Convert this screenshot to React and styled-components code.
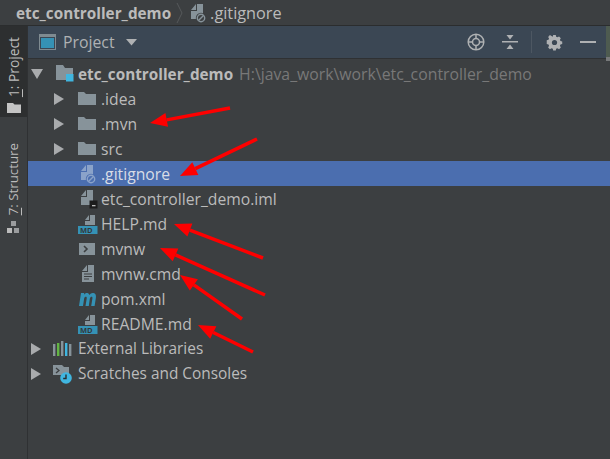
import React from 'react';
import styled, { createGlobalStyle } from 'styled-components';

const GlobalStyle = createGlobalStyle`
    html, body {
        margin: 0;
        padding: 0;
        background: #3c3f41;
    }
`;

const Page = styled.div`
    position: relative;
    width: 610px;
    height: 459px;
    overflow: hidden;
    background: #3c3f41;
    color: #bbbbbb;
    font-family: "Open Sans", "Noto Sans", sans-serif;
    font-size: 15.8px;
`;

const Breadcrumb = styled.div`
    height: 26px;
    box-sizing: border-box;
    border-bottom: 1px solid #2b2d2e;
    display: flex;
    align-items: center;
    padding-left: 16px;
    gap: 5px;
`;

const Crumb = styled.span`
    font-weight: ${(p) => (p.$bold ? 700 : 400)};
    font-size: ${(p) => (p.$bold ? 15.3 : 16.3)}px;
    line-height: 24px;
    white-space: nowrap;
`;

const Body = styled.div`
    display: flex;
    height: 433px;
`;

const SideStrip = styled.div`
    width: 28px;
    box-sizing: border-box;
    border-right: 1px solid #2f3133;
    display: flex;
    flex-direction: column;
    flex-shrink: 0;
`;

const SideTab = styled.div`
    width: 27px;
    height: ${(p) => p.$height}px;
    box-sizing: border-box;
    background: ${(p) => (p.$active ? '#2d2f30' : 'transparent')};
    display: flex;
    flex-direction: column-reverse;
    align-items: center;
    justify-content: flex-start;
    gap: 6px;
    padding-bottom: 4px;
`;

const SideLabel = styled.span`
    writing-mode: vertical-rl;
    transform: rotate(180deg);
    font-size: ${(p) => p.$size}px;
    line-height: 15px;
    white-space: nowrap;
    u {
        text-underline-offset: 1px;
    }
`;

const Panel = styled.div`
    flex: 1;
    display: flex;
    flex-direction: column;
    min-width: 0;
`;

const Header = styled.div`
    position: relative;
    height: 33px;
    box-sizing: border-box;
    background: #3b4754;
    border-bottom: 1px solid #2f3133;
    border-right: 4px solid #4e5b50;
    display: flex;
    align-items: center;
    padding-left: 11px;
    padding-right: 10px;

    &::after {
        content: "";
        position: absolute;
        right: -4px;
        bottom: -3px;
        width: 4px;
        height: 4px;
        background: #77797a;
    }
`;

const HeaderTitle = styled.span`
    margin-left: 7px;
    line-height: 18px;
    color: #afb1b3;
`;

const HeaderCaret = styled.svg`
    margin-left: 11px;
`;

const Tools = styled.div`
    margin-left: auto;
    display: flex;
    align-items: center;
    height: 100%;
`;

const ToolIcon = styled.svg`
    display: block;
    flex-shrink: 0;
    margin-left: ${(p) => p.$gap || 0}px;
`;

const Divider = styled.div`
    width: 1px;
    height: 22px;
    background: #4d5762;
    margin-left: 13px;
`;

const Tree = styled.div`
    padding-top: 2px;
    display: flex;
    flex-direction: column;
`;

const Row = styled.div`
    height: 25px;
    display: flex;
    align-items: center;
    padding-left: ${(p) => p.$indent}px;
    background: ${(p) => (p.$selected ? '#4b6eaf' : 'transparent')};
    white-space: nowrap;
`;

const Arrow = styled.span`
    width: 0;
    height: 0;
    flex-shrink: 0;
    margin-right: ${(p) => p.$after}px;
    ${(p) =>
        p.$open
            ? `border-left: 6px solid transparent;
               border-right: 6px solid transparent;
               border-top: 10px solid #a9abad;`
            : `border-top: 6px solid transparent;
               border-bottom: 6px solid transparent;
               border-left: 10px solid #a9abad;`}
`;

const RowIcon = styled.svg`
    display: block;
    flex-shrink: 0;
    overflow: visible;
    margin-right: ${(p) => p.$after}px;
`;

const Name = styled.span`
    color: ${(p) => (p.$bright ? '#d8dde6' : '#bbbbbb')};
    font-weight: ${(p) => (p.$bold ? 700 : 400)};
    font-size: ${(p) => (p.$bold ? 15.3 : p.$root ? 15.4 : 15.7)}px;
`;

const Path = styled.span`
    margin-left: 6px;
    color: #787878;
`;

const Overlay = styled.svg`
    position: absolute;
    left: 0;
    top: 0;
    pointer-events: none;
`;

const FolderIcon = () => (
    <RowIcon $after={5} width={18} height={18} viewBox="0 0 18 18">
        <path d="M0 2h6l2 2h10v11H0z" fill="#87939a" />
    </RowIcon>
);

const ModuleIcon = () => (
    <RowIcon $after={3} width={20} height={20} viewBox="0 0 20 20">
        <path d="M1 1h7l2 3h8v12H1z" fill="#87939a" />
        <rect x="11" y="10" width="7.500" height="7.500" fill="#40b6e0" />
    </RowIcon>
);

// the sheet with the folded corner, used by most of the files
const Sheet = ({ fill = '#87939a' }) => (
    <path d="M2 7l5-6v6zM2 8h6V1h6v15H2z" fill={fill} />
);

const IgnoredIcon = ({ fill = '#87939a', back = '#3c3f41', after = 4 }) => (
    <RowIcon $after={after} width={18} height={20} viewBox="0 0 18 20">
        <Sheet fill={fill} />
        <circle cx="12" cy="15" r="5.200" fill={back} />
        <circle cx="12" cy="15" r="3.700" fill="none" stroke={fill} strokeWidth="1.400" />
        <path d="M9.500 17.500l5-5" stroke={fill} strokeWidth="1.400" />
    </RowIcon>
);

const ImlIcon = () => (
    <RowIcon $after={4} width={18} height={20} viewBox="0 0 18 20">
        <Sheet />
        <rect x="10.500" y="11.500" width="8" height="8" fill="#1c1c1c" />
        <rect x="13" y="16" width="3.500" height="1.300" fill="#bbbbbb" />
    </RowIcon>
);

const MdIcon = () => (
    <RowIcon $after={3} width={20} height={20} viewBox="0 0 20 20">
        <path d="M7 6l4-5v5zM7 7h5V1h5v10H7z" fill="#87939a" />
        <rect x="0" y="12" width="19.500" height="8" fill="#3592b5" />
        <text x="2" y="18.800" fontFamily="Open Sans, sans-serif" fontSize="7.500" fontWeight="700" fill="#33383b">MD</text>
    </RowIcon>
);

const ShellIcon = () => (
    <RowIcon $after={6} width={16} height={14} viewBox="0 0 16 14">
        <rect x="0" y="1" width="16" height="12" fill="#87939a" />
        <path d="M5 4l3 3-3 3" fill="none" stroke="#3c3f41" strokeWidth="1.600" />
    </RowIcon>
);

const TextFileIcon = () => (
    <RowIcon $after={6} width={14} height={18} viewBox="0 0 14 18">
        <path d="M1 6l5-6v6zM1 7h6V0h6v17H1z" fill="#87939a" />
        <path d="M3 9h8M3 11.500h8M3 14h5" stroke="#3c3f41" strokeWidth="1.200" />
    </RowIcon>
);

const MavenIcon = () => (
    <RowIcon $after={3} width={20} height={18} viewBox="0 0 20 18">
        <path transform="translate(0 -3.300) scale(1 1.280)" d="M1 15l2-10h3.200l-.2 1.300C7 5 8.500 4.700 9.500 5c1 .2 1.500.8 1.800 1.500C12.500 5.200 14 4.700 15.500 5c2 .3 2.800 1.800 2.400 3.700L16.600 15h-3.400l1.200-5.700c.2-1-.1-1.500-.9-1.500-.7 0-1.300.4-1.600 1.300L10.800 15H7.500l1.200-5.800c.2-.9-.1-1.400-.9-1.400-.7 0-1.300.4-1.600 1.200L5 15z" fill="#3592b5" />
    </RowIcon>
);

const LibrariesIcon = () => (
    <RowIcon $after={6} width={19} height={16} viewBox="0 0 19 16">
        <rect x="0" y="3" width="2.400" height="12" fill="#87939a" />
        <rect x="4" y="2" width="2.400" height="13" fill="#62b543" />
        <rect x="8" y="0" width="2.400" height="15" fill="#87939a" />
        <rect x="12" y="2" width="2.400" height="13" fill="#40b6e0" />
        <rect x="16" y="3" width="2.400" height="12" fill="#87939a" />
    </RowIcon>
);

const ScratchIcon = () => (
    <RowIcon $after={6} width={19} height={20} viewBox="0 0 19 20">
        <path d="M0 1h9l2 2h5v8H0z" fill="#87939a" />
        <path d="M3 4l3 2.500L3 9" fill="none" stroke="#3c3f41" strokeWidth="1.300" />
        <circle cx="13" cy="14" r="5.800" fill="#40b6e0" />
        <path d="M13 10.500V14.500h-2.800" fill="none" stroke="#2b2d2e" strokeWidth="1.400" />
    </RowIcon>
);

const red = '#fe0000';

// hand drawn arrows on top of the screenshot: [tailX, tailY, tipX, tipY]
const arrows = [
    [230, 108, 150, 123],
    [257, 139, 180, 176],
    [263, 258, 174, 224],
    [265, 295, 160, 248],
    [242, 319, 180, 275],
    [253, 352, 198, 325],
];

const RedArrow = ({ line }) => {
    const [x1, y1, x2, y2] = line;
    const len = Math.hypot(x2 - x1, y2 - y1);
    const ux = (x2 - x1) / len;
    const uy = (y2 - y1) / len;
    const bx = x2 - ux * 17;
    const by = y2 - uy * 17;
    const head = `${x2},${y2} ${bx - uy * 7},${by + ux * 7} ${bx + uy * 7},${by - ux * 7}`;
    return (
        <g>
            <line x1={x1} y1={y1} x2={bx} y2={by} stroke={red} strokeWidth="3.500" />
            <polygon points={head} fill={red} />
        </g>
    );
};

const App = () => (
    <Page>
        <GlobalStyle />
        <Breadcrumb>
            <Crumb $bold>etc_controller_demo</Crumb>
            <svg width="8" height="22" viewBox="0 0 8 22">
                <path d="M1 1l5 10-5 10" fill="none" stroke="#56595b" strokeWidth="1" />
            </svg>
            <IgnoredIcon after={-2} />
            <Crumb>.gitignore</Crumb>
        </Breadcrumb>
        <Body>
            <SideStrip>
                <SideTab $active $height={91}>
                    <svg width="14" height="10" viewBox="0 0 14 10">
                        <path d="M0 0h6l1.500 1.500H14V10H0z" fill="#c4c4c4" />
                    </svg>
                    <SideLabel $size={13.8}>
                        <u>1</u>: Project
                    </SideLabel>
                </SideTab>
                <SideTab $height={120}>
                    <svg width="13" height="12" viewBox="0 0 13 12">
                        <rect x="4" y="0" width="5" height="5" fill="#9a9c9e" />
                        <rect x="0" y="7" width="5" height="5" fill="#bbbbbb" />
                        <rect x="7" y="7" width="5" height="5" fill="#9a9c9e" />
                    </svg>
                    <SideLabel $size={13.3}>
                        <u>7</u>: Structure
                    </SideLabel>
                </SideTab>
            </SideStrip>
            <Panel>
                <Header>
                    <svg width="17" height="16" viewBox="0 0 17 16">
                        <rect x="0.500" y="0.500" width="16" height="15" fill="none" stroke="#7f8b91" />
                        <rect x="2" y="4" width="13" height="10" fill="#3592b5" />
                        <rect x="1" y="1" width="15" height="2" fill="#7f8b91" />
                    </svg>
                    <HeaderTitle>Project</HeaderTitle>
                    <HeaderCaret width="12" height="7" viewBox="0 0 12 7">
                        <path d="M0 0h11L5.500 6.500z" fill="#afb1b3" />
                    </HeaderCaret>
                    <Tools>
                        <ToolIcon width="18" height="18" viewBox="0 0 18 18">
                            <circle cx="9" cy="9" r="7.800" fill="none" stroke="#afb1b3" strokeWidth="1.500" />
                            <circle cx="9" cy="9" r="3.500" fill="none" stroke="#afb1b3" strokeWidth="1.500" />
                            <path d="M9 1v4.500M9 12.500V17M1 9h4.500M12.500 9H17" stroke="#afb1b3" strokeWidth="1.500" />
                        </ToolIcon>
                        <ToolIcon $gap={17} width="16" height="16" viewBox="0 0 16 16">
                            <rect x="0" y="7" width="16" height="1.500" fill="#afb1b3" />
                            <path d="M4.500 1h7L8 5.500zM4.500 15h7L8 10.500z" fill="#afb1b3" />
                        </ToolIcon>
                        <Divider />
                        <ToolIcon $gap={14} width="17" height="17" viewBox="0 0 17 17">
                            <path d="M7 1h3l.4 2 1.500.7 1.800-1 2 2.100-1 1.700.6 1.500 2 .5v3l-2 .4-.6 1.500 1 1.800-2 2-1.800-1-1.500.6-.4 2H7l-.4-2-1.500-.6-1.800 1-2-2 1-1.800-.6-1.500-2-.4V7l2-.5.6-1.500-1-1.700 2-2.100 1.800 1L6.600 3z" fill="#afb1b3" transform="translate(1 0) scale(.88)" />
                            <circle cx="8.500" cy="8.500" r="2.600" fill="#3b4754" />
                        </ToolIcon>
                        <ToolIcon $gap={17} width="16" height="4" viewBox="0 0 16 4">
                            <rect x="0" y="1" width="16" height="2" fill="#afb1b3" />
                        </ToolIcon>
                    </Tools>
                </Header>
                <Tree>
                    <Row $indent={3}>
                        <Arrow $open $after={12} />
                        <ModuleIcon />
                        <Name $bold>etc_controller_demo</Name>
                        <Path>H:\java_work\work\etc_controller_demo</Path>
                    </Row>
                    {['.idea', '.mvn', 'src'].map((name) => (
                        <Row key={name} $indent={26}>
                            <Arrow $after={14} />
                            <FolderIcon />
                            <Name>{name}</Name>
                        </Row>
                    ))}
                    <Row $indent={51} $selected>
                        <IgnoredIcon fill="#8ba3c9" back="#4b6eaf" />
                        <Name $bright>.gitignore</Name>
                    </Row>
                    <Row $indent={51}>
                        <ImlIcon />
                        <Name>etc_controller_demo.iml</Name>
                    </Row>
                    <Row $indent={50}>
                        <MdIcon />
                        <Name>HELP.md</Name>
                    </Row>
                    <Row $indent={51}>
                        <ShellIcon />
                        <Name>mvnw</Name>
                    </Row>
                    <Row $indent={53}>
                        <TextFileIcon />
                        <Name>mvnw.cmd</Name>
                    </Row>
                    <Row $indent={50}>
                        <MavenIcon />
                        <Name>pom.xml</Name>
                    </Row>
                    <Row $indent={50}>
                        <MdIcon />
                        <Name>README.md</Name>
                    </Row>
                    <Row $indent={3}>
                        <Arrow $after={12} />
                        <LibrariesIcon />
                        <Name $root>External Libraries</Name>
                    </Row>
                    <Row $indent={3}>
                        <Arrow $after={12} />
                        <ScratchIcon />
                        <Name $root>Scratches and Consoles</Name>
                    </Row>
                </Tree>
            </Panel>
        </Body>
        <Overlay width="610" height="459" viewBox="0 0 610 459">
            {arrows.map((line) => (
                <RedArrow key={line.join('-')} line={line} />
            ))}
        </Overlay>
    </Page>
);

export default App;
